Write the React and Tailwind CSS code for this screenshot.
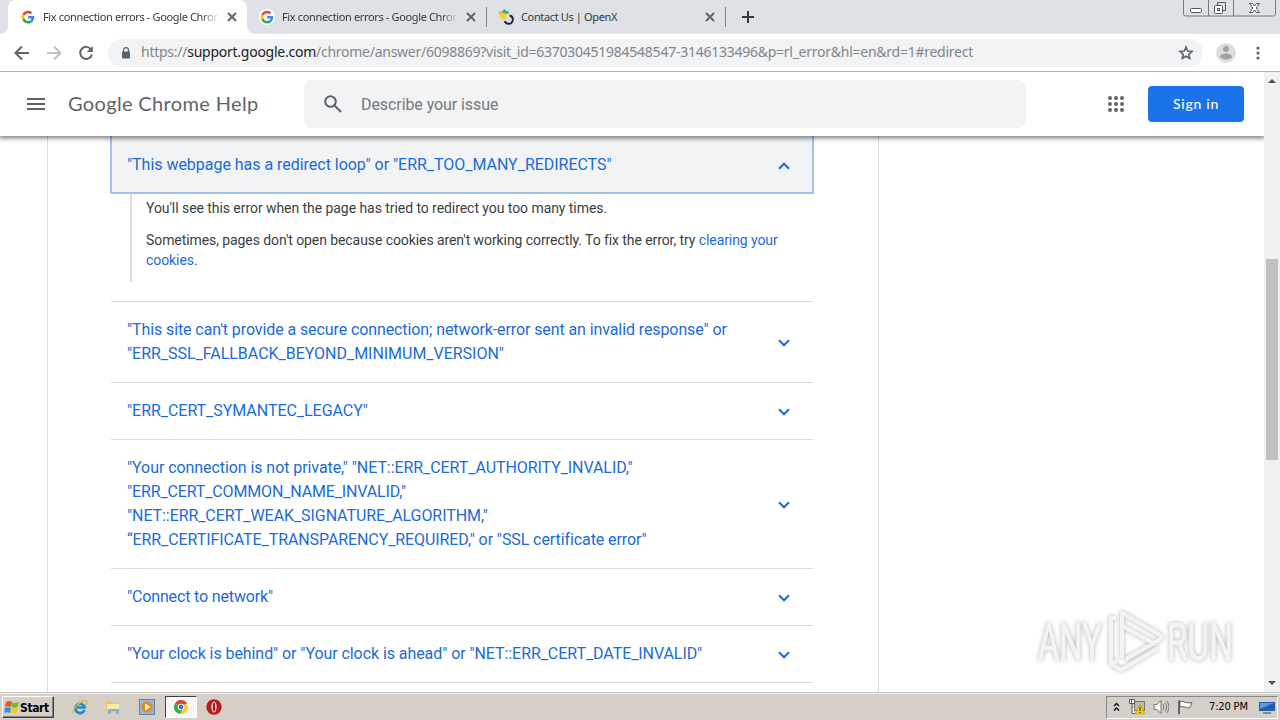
import React, { useState } from 'react';

const errors = [
    {
        lines: ['"This site can\'t provide a secure connection; network-error sent an invalid response" or', '"ERR_SSL_FALLBACK_BEYOND_MINIMUM_VERSION"'],
        tracking: ['tracking-[-0.098px]', 'tracking-[-0.025px]'],
    },
    { lines: ['"ERR_CERT_SYMANTEC_LEGACY"'], tracking: ['tracking-[-0.04px]'] },
    {
        lines: [
            '"Your connection is not private," "NET::ERR_CERT_AUTHORITY_INVALID,"',
            '"ERR_CERT_COMMON_NAME_INVALID,"',
            '"NET::ERR_CERT_WEAK_SIGNATURE_ALGORITHM,"',
            '“ERR_CERTIFICATE_TRANSPARENCY_REQUIRED," or "SSL certificate error"',
        ],
        tracking: ['tracking-[-0.07px]', 'tracking-[-0.14px]', 'tracking-[-0.075px]', 'tracking-[-0.09px]'],
    },
    { lines: ['"Connect to network"'], tracking: ['tracking-[-0.15px]'] },
    { lines: ['"Your clock is behind" or "Your clock is ahead" or "NET::ERR_CERT_DATE_INVALID"'], tracking: ['tracking-[-0.07px]'] },
];

function GoogleIcon() {
    return (
        <svg className="size-4 shrink-0" viewBox="0 0 48 48">
            <circle cx="24" cy="24" r="24" fill="#fff" />
            <g transform="translate(5 5) scale(.8)">
                <path fill="#EA4335" d="M24 9.5c3.54 0 6.71 1.22 9.21 3.6l6.85-6.85C35.9 2.38 30.47 0 24 0 14.62 0 6.51 5.38 2.56 13.22l7.98 6.19C12.43 13.72 17.74 9.5 24 9.5z" />
                <path fill="#4285F4" d="M46.98 24.55c0-1.57-.15-3.09-.38-4.55H24v9.02h12.94c-.58 2.96-2.26 5.48-4.78 7.18l7.73 6c4.51-4.18 7.09-10.36 7.09-17.65z" />
                <path fill="#FBBC05" d="M10.53 28.59A14.5 14.5 0 0 1 9.77 24c0-1.6.27-3.14.76-4.59l-7.98-6.19A23.9 23.9 0 0 0 0 24c0 3.88.92 7.54 2.56 10.78l7.97-6.19z" />
                <path fill="#34A853" d="M24 48c6.48 0 11.93-2.13 15.89-5.81l-7.73-6c-2.15 1.45-4.92 2.3-8.16 2.3-6.26 0-11.57-4.22-13.47-9.91l-7.98 6.19C6.51 42.62 14.62 48 24 48z" />
            </g>
        </svg>
    );
}

function OpenXIcon() {
    return (
        <svg className="size-4 shrink-0" viewBox="0 0 16 16" fill="none">
            <path d="m2 5 4-2 3 2-1 5-3 1-3-2z" fill="#f5d32f" />
            <path d="M4 2 7 0l1 2 3 .5-.500 2.500L7 4.500 5 4z" fill="#35a79c" />
            <path d="m0 3 4-1.500 1 3L2 6z" fill="#f0b53c" />
            <path d="M11.500 6.500c2.800.5 3.500 2.500 3.300 4.500-.3 2.500-2.300 4-4.300 3.800-2-.1-3.300-1.300-3.600-2.800" stroke="#25243a" strokeWidth="2" />
        </svg>
    );
}

function CloseIcon() {
    return (
        <svg className="size-[10px] shrink-0" viewBox="0 0 10 10" stroke="#5f6368" strokeWidth="1.9">
            <path d="m1 1 8 8M9 1 1 9" />
        </svg>
    );
}

function Tab({ icon, title, active, fade = true }) {
    return (
        <div className={`relative flex h-[34px] w-[239px] items-center pl-3 pr-[10px] ${active ? 'rounded-t-lg bg-white' : ''}`}>
            {icon}
            <span className={`ml-[7px] mt-px w-[176px] whitespace-nowrap text-[11px] text-[#35383c] ${fade ? 'mask-r-from-90% tracking-[-0.36px]' : 'tracking-[-0.36px]'}`}>{title}</span>
            <span className="ml-auto"><CloseIcon /></span>
        </div>
    );
}

function TabStrip() {
    return (
        <div className="flex h-[34px] bg-[#dee1e6] font-['Noto_Sans',sans-serif]">
            <div className="w-2 bg-white"><div className="h-full rounded-br-lg bg-[#dee1e6]" /></div>
            <Tab icon={<GoogleIcon />} title="Fix connection errors - Google Chrom" active />
            <div className="-mr-2 w-2 bg-white"><div className="h-full rounded-bl-lg bg-[#dee1e6]" /></div>
            <Tab icon={<GoogleIcon />} title="Fix connection errors - Google Chrom" />
            <div className="mt-[7px] h-5 w-px -mr-px bg-[#808488]" />
            <Tab icon={<OpenXIcon />} title="Contact Us | OpenX" fade={false} />
            <div className="mt-[7px] h-5 w-px bg-[#808488]" />
            <svg className="ml-4 mt-[11px] size-3" viewBox="0 0 12 12" stroke="#35383c" strokeWidth="2"><path d="M6 0v12M0 6h12" /></svg>
            <svg className="ml-auto mr-1 h-[17px] w-[93px]" viewBox="0 0 93 17" fill="none" stroke="#777b82">
                <path d="M.5 0v14q0 2 2 2h88q2 0 2-2V0M25.500 0v16M50.500 0v16" />
                <rect x="7.500" y="8.500" width="11" height="4" rx="1" stroke="#555" fill="#fff" />
                <path d="M34.500 5V2.500h8v8H40" stroke="#555" />
                <rect x="31.500" y="5.500" width="8" height="8" rx="1" stroke="#555" fill="#fff" />
                <rect x="34.500" y="8.500" width="2" height="2" stroke="#555" />
                <path d="M66.500 3.500h3l2 2.500 2-2.500h3l-3.300 4.500 3.300 4.500h-3l-2-2.500-2 2.500h-3l3.300-4.500z" stroke="#555" fill="#fff" />
            </svg>
        </div>
    );
}

function Toolbar() {
    return (
        <div className="flex h-[38px] items-center border-b border-[#b4b4ae] bg-white pl-[14px]">
            <svg className="size-4" viewBox="0 0 16 16" fill="none" stroke="#5f6368" strokeWidth="2"><path d="M15 8H2M8 1.500 1.500 8 8 14.500" /></svg>
            <svg className="ml-4 size-4" viewBox="0 0 16 16" fill="none" stroke="#bdbfc1" strokeWidth="2"><path d="M1 8h13M8 1.500 14.500 8 8 14.500" /></svg>
            <svg className="ml-4 size-4" viewBox="0 0 16 16" fill="none">
                <path d="M13.200 4.500A6 6 0 1 0 14 9.500" stroke="#5f6368" strokeWidth="2" />
                <path d="M14.800 1v6h-6z" fill="#5f6368" />
            </svg>
            <div className="ml-[14px] flex h-7 w-[1095px] items-center rounded-full bg-[#f1f3f4] pl-[13px] pr-[9px] font-['Noto_Sans',sans-serif]">
                <svg className="h-3 w-[10px]" viewBox="0 0 10 12"><path d="M2.500 5V3.200a2.500 2.500 0 0 1 5 0V5" fill="none" stroke="#5f6368" strokeWidth="1.300" /><rect x="1" y="4.500" width="8" height="7" rx="1" fill="#5f6368" /></svg>
                <span className="-mt-0.5 ml-[10px] whitespace-nowrap text-[14px] tracking-[-0.255px] text-[#80868b]">
                    https://<span className="text-[#202124]">support.google.com</span>/chrome/answer/6098869?visit_id=637030451984548547-3146133496&amp;p=rl_error&amp;hl=en&amp;rd=1#redirect
                </span>
                <svg className="ml-auto size-4" viewBox="0 0 16 16" fill="none" stroke="#5f6368" strokeWidth="1.600"><path d="m8 2 1.700 4 4.300.4-3.200 2.900.9 4.200L8 11.300l-3.700 2.200.9-4.200L2 6.400l4.300-.4z" /></svg>
            </div>
            <svg className="ml-[13px] size-5" viewBox="0 0 20 20"><circle cx="10" cy="10" r="10" fill="#dcdddf" /><circle cx="10" cy="6" r="3" fill="#a0a2a5" /><ellipse cx="10" cy="13.500" rx="6" ry="3" fill="#a0a2a5" /></svg>
            <svg className="ml-5 h-4 w-1" viewBox="0 0 4 16" fill="#5f6368"><circle cx="2" cy="3" r="1.600" /><circle cx="2" cy="8" r="1.600" /><circle cx="2" cy="13" r="1.600" /></svg>
        </div>
    );
}

function HelpHeader() {
    return (
        <header className="z-10 flex h-16 shrink-0 items-center bg-white pl-[27px] pr-5 shadow-[0_1px_5px_1px_rgba(0,0,0,0.55)]">
            <svg className="h-3 w-[18px]" viewBox="0 0 18 12" fill="#5f6368"><path d="M0 0h18v2H0zM0 5h18v2H0zM0 10h18v2H0z" /></svg>
            <h1 className="-mt-0.5 ml-[23px] w-[236px] whitespace-nowrap font-[Lato,sans-serif] text-[20px] tracking-[0.35px] text-[#5f6368]">Google Chrome Help</h1>
            <div className="flex h-12 w-[722px] items-center rounded-lg bg-[#f1f3f4] pl-5">
                <svg className="size-[18px]" viewBox="0 0 18 18" fill="none" stroke="#5f6368" strokeWidth="2"><circle cx="6.500" cy="6.500" r="5.300" /><path d="m10.500 10.500 6.500 6.500" /></svg>
                <span className="ml-[19px] mt-px font-[Roboto,sans-serif] text-[16px] tracking-[-0.08px] text-[#76797d]">Describe your issue</span>
            </div>
            <svg className="ml-auto size-4" viewBox="0 0 16 16" fill="#5f6368">
                {[2, 8, 14].map((y) => [2, 8, 14].map((x) => <circle key={`${x}-${y}`} cx={x} cy={y} r="2" />))}
            </svg>
            <button className="ml-6 h-9 w-24 rounded bg-[#1a73e8] pb-0.5 font-[Lato,sans-serif] text-[14px] font-medium tracking-[0.750px] text-white">Sign in</button>
        </header>
    );
}

function Chevron({ up }) {
    return (
        <svg className={`mt-0.5 h-2 w-3 shrink-0 ${up ? 'rotate-180' : ''}`} viewBox="0 0 12 8" fill="none" stroke="#1a6bd9" strokeWidth="2"><path d="m1 1.300 5 5 5-5" /></svg>
    );
}

function ErrorList() {
    const [open, setOpen] = useState(true);

    return (
        <div className="font-[Roboto,sans-serif]">
            <div className="-mx-px border-2 border-t-0 border-[#a1c2ec] rounded-b-xs bg-[#f1f3f4]">
                <button onClick={() => setOpen(!open)} className="flex h-[56px] w-full items-center justify-between pl-[15px] pr-[22px] pt-0.5 text-left text-[16px] text-[#1a6bd9]">
                    <span className="whitespace-nowrap tracking-[-0.03px]">"This webpage has a redirect loop" or "ERR_TOO_MANY_REDIRECTS"</span>
                    <Chevron up={open} />
                </button>
            </div>
            {open && (
                <div className="mb-[19px] ml-[19px] h-[88px] border-l-2 border-[#dadce0] pl-[14px] pt-1 text-[14px] leading-5 text-[#3c4043]">
                    <p className="mb-3 whitespace-nowrap tracking-[-0.06px]">You'll see this error when the page has tried to redirect you too many times.</p>
                    <p className="whitespace-nowrap tracking-[-0.08px]">
                        Sometimes, pages don't open because cookies aren't working correctly. To fix the error, try <a className="text-[#1a6bd9]">clearing your<br />cookies</a>.
                    </p>
                </div>
            )}
            {errors.map((item) => (
                <div key={item.lines[0]} className="flex items-center justify-between border-t border-[#dadce0] py-4 pl-4 pr-[23px] text-[16px] leading-6 text-[#1a6bd9]">
                    <div>
                        {item.lines.map((line, i) => (
                            <div key={line} className={`whitespace-nowrap ${item.tracking[i]}`}>{line}</div>
                        ))}
                    </div>
                    <Chevron />
                </div>
            ))}
            <div className="border-t border-[#dadce0]" />
        </div>
    );
}

function Scrollbar() {
    return (
        <div className="flex w-4 shrink-0 flex-col items-center bg-[#f1f1f1]">
            <svg className="mt-[7px] h-1 w-2" viewBox="0 0 8 4" fill="#505050"><path d="m0 4 4-4 4 4z" /></svg>
            <div className="mt-[176px] h-[201px] w-3 bg-[#c1c1c1]" />
            <svg className="mb-[7px] mt-auto h-1 w-2" viewBox="0 0 8 4" fill="#505050"><path d="m0 0 4 4 4-4z" /></svg>
        </div>
    );
}

function Watermark() {
    return (
        <svg className="absolute left-[1030px] top-[605px] h-[75px] w-[215px] drop-shadow-[0_0_2px_rgba(0,0,0,0.3)]" viewBox="0 0 215 75" fontFamily="Roboto, sans-serif" fontSize="52">
            <g fill="#f4f4f4" stroke="#f4f4f4">
                <text transform="translate(8 55) scale(.68 1)" textLength="94" lengthAdjust="spacingAndGlyphs">ANY</text>
                <text transform="translate(137 55) scale(.68 1)" textLength="97" lengthAdjust="spacingAndGlyphs">RUN</text>
            </g>
            <g fill="none" stroke="#f4f4f4" strokeWidth="4" strokeLinejoin="round">
                <path d="M92 53V8l38 22q3 3-1 5L96 54" />
                <path d="M86 13h-5v46l6-3M92 21l33 18M81 59l10 6 37-22M92 20v32" />
            </g>
        </svg>
    );
}

function Taskbar() {
    return (
        <div className="flex h-7 items-center border-t border-[#c9c6c1] bg-[#d6cfc7] pl-[2px] pr-[2px] pt-px shadow-[inset_0_1px_0_#f5f2ed]">
            <button className="flex h-[22px] w-[52px] items-center border border-b-[#404040] border-l-white border-r-[#404040] border-t-white pl-px font-['DejaVu_Sans_Condensed','DejaVu_Sans',sans-serif] text-[12px] font-bold text-black shadow-[inset_-1px_-1px_0_#808080]">
                <svg className="h-[15px] w-4 shrink-0" viewBox="0 0 16 15">
                    <path d="M2 2q3-2 6 0L7 7Q4 5.500 1 7z" fill="#e25822" />
                    <path d="M8.600 2.300q3 1.500 6.400-.500l-1.200 5q-3 1.500-6.200.300z" fill="#76b82a" />
                    <path d="M1 8Q4 6.500 7 8l-1 5q-3-1.500-6 0z" fill="#368ddd" />
                    <path d="M7.500 8q3 1.500 6.200-.200l-1.100 5q-3 1.800-6.200.200z" fill="#f9c424" />
                </svg>
                <span className="mt-px tracking-[-0.400px]">Start</span>
            </button>
            <svg className="ml-[18px] size-4" viewBox="0 0 16 16" fill="none">
                <path d="M12.500 11A4.700 4.700 0 1 1 12.700 8.500H5" stroke="#2388d5" strokeWidth="2.600" />
                <path d="M2 14C-2 13 9 0 14 2c2 1 0 4-1 5" stroke="#d6b842" strokeWidth="1.300" />
            </svg>
            <svg className="ml-[17px] size-4" viewBox="0 0 16 16">
                <path d="M1 2h6l1 2h6v10H1z" fill="#e9c766" />
                <path d="M2 5h12v7H2z" fill="#f8eaa9" />
                <path d="M3 15v-5h11v5h-3v-3H6v3z" fill="#70b5df" />
            </svg>
            <svg className="ml-[18px] size-4" viewBox="0 0 16 16">
                <rect x=".5" y=".5" width="15" height="15" fill="#8ebde4" stroke="#5288bb" />
                <circle cx="8" cy="8" r="5.800" fill="#f18418" />
                <path d="M6 4.500v7L11.500 8z" fill="#fff" />
            </svg>
            <div className="ml-[10px] flex h-[22px] w-8 items-center justify-center border border-b-white border-l-[#404040] border-r-white border-t-[#404040] bg-[#faf9f7]">
                <svg className="size-[14px]" viewBox="0 0 16 16">
                    <path d="M8 8 1 4a8 8 0 0 1 14 0z" fill="#df4432" />
                    <path d="M8 8 1 4a8 8 0 0 0 6 12l4-7z" fill="#3caa4d" />
                    <path d="M8 5h7.400A8 8 0 0 1 7 16l4-7z" fill="#f9cb32" />
                    <circle cx="8" cy="8" r="3.700" fill="#fff" /><circle cx="8" cy="8" r="2.800" fill="#3978db" />
                </svg>
            </div>
            <svg className="ml-[9px] size-4" viewBox="0 0 16 16"><circle cx="8" cy="8" r="7.700" fill="#b91c1c" /><ellipse cx="8" cy="8" rx="2.600" ry="5.500" fill="#f8dddd" /><ellipse cx="8" cy="8" rx="1.200" ry="4.500" fill="#a31818" /></svg>
            <div className="ml-auto flex h-[23px] w-[172px] items-center border border-b-white border-l-[#888] border-r-white border-t-[#888] pl-[6px] pr-[2px]">
                <svg className="h-[10px] w-[7px]" viewBox="0 0 7 10" fill="none" stroke="#111" strokeWidth="1.400"><path d="m1 4 2.500-2.500L6 4M1 8.500 3.500 6 6 8.500" /></svg>
                <svg className="ml-[9px] size-4" viewBox="0 0 16 16">
                    <rect x="5.500" y="2.500" width="10" height="9" fill="#bcbcb8" stroke="#777" />
                    <path d="M.5.5h5v4h-5zM2.500 0v4M3 4.500v10h3" fill="#fff" stroke="#555" />
                    <path d="m11 5 5 10H6z" fill="#f5d000" stroke="#a88b00" strokeWidth=".5" /><path d="M11 8v4m0 1v1" stroke="#222" />
                </svg>
                <svg className="ml-[8px] size-4" viewBox="0 0 16 16" fill="none" stroke="#777"><path d="M1 5.500h3l4-4v13l-4-4H1z" fill="#f4f4f4" /><path d="M10 5q2 3 0 6M12 3.500q3.500 4.500 0 9M14 2q4 6 0 12" /></svg>
                <svg className="ml-[8px] size-4" viewBox="0 0 16 16" fill="#fff" stroke="#666"><path d="M1.500 15V1.500h1V15z" /><path d="M3 2.500q3-1 6 1 3 1 6 0l-2 5q-3 1-5-.500-3-1-5 0z" /></svg>
                <span className="ml-[16px] mt-px whitespace-nowrap font-['DejaVu_Sans_Condensed','DejaVu_Sans',sans-serif] text-[11px] tracking-[-0.150px] text-black">7:20 PM</span>
                <svg className="ml-auto h-[13px] w-4" viewBox="0 0 16 13"><path d="M0 1h16v9H0z" fill="#245bad" /><path d="M1 2h14L1 8z" fill="#599ae0" /><path d="M4 12h8" stroke="#345" /></svg>
            </div>
        </div>
    );
}

export default function App() {
    return (
        <div className="relative flex h-[720px] w-[1280px] flex-col overflow-hidden bg-white">
            <TabStrip />
            <Toolbar />
            <div className="flex h-[620px]">
                <div className="flex w-[1264px] flex-col overflow-hidden">
                    <HelpHeader />
                    <main className="ml-[47px] h-[556px] w-[832px] border-x border-[#dadce0] pl-[63px] pr-[65px]">
                        <ErrorList />
                    </main>
                </div>
                <Scrollbar />
            </div>
            <Taskbar />
            <Watermark />
        </div>
    );
}
